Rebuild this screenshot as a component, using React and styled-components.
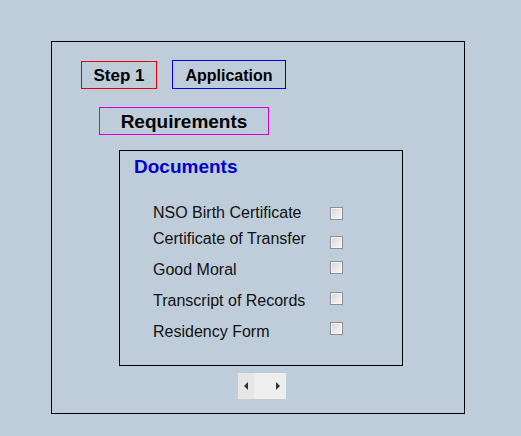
import React from "react";
import styled, { createGlobalStyle } from "styled-components";

const GlobalStyle = createGlobalStyle`
  html, body {
    margin: 0;
    padding: 0;
    background: #bfcddb;
  }
  body {
    font-family: Arial, "Liberation Sans", sans-serif;
    color: #000;
  }
`;

const documents = [
  { label: "NSO Birth Certificate", top: 26, shift: 3 },
  { label: "Certificate of Transfer", top: 8, shift: 6 },
  { label: "Good Moral", top: 12, shift: 0 },
  { label: "Transcript of Records", top: 13, shift: 0 },
  { label: "Residency Form", top: 13, shift: -1 },
];

const App = () => {
  return (
    <>
      <GlobalStyle />
      <Page>
        <Frame>
          <Tabs>
            <Tag $color="#e00000" $w={76} $h={28} $size={17}>
              Step 1
            </Tag>
            <Tag $color="#0000e0" $w={114} $h={29} $size={16}>
              Application
            </Tag>
          </Tabs>
          <Heading>
            <Tag $color="#d000d0" $w={170} $h={28} $size={19}>
              Requirements
            </Tag>
          </Heading>
          <DocBox>
            <DocTitle>Documents</DocTitle>
            {documents.map((d) => (
              <DocRow key={d.label} $top={d.top}>
                <DocLabel>{d.label}</DocLabel>
                <Check $shift={d.shift} />
              </DocRow>
            ))}
          </DocBox>
          <Pager>
            <Arrow $dir="left" />
            <Arrow $dir="right" />
          </Pager>
        </Frame>
      </Page>
    </>
  );
};

export default App;

const Page = styled.div`
  padding: 41px 0 0 51px;
`;

const Frame = styled.div`
  box-sizing: border-box;
  width: 414px;
  height: 373px;
  border: 1px solid #000;
  padding: 18px 0 0 29px;
`;

const Tabs = styled.div`
  display: flex;
  align-items: flex-end;
  gap: 15px;
`;

const Heading = styled.div`
  margin: 18px 0 0 18px;
`;

const Tag = styled.div`
  box-sizing: border-box;
  width: ${(p) => p.$w}px;
  height: ${(p) => p.$h}px;
  border: 1px solid ${(p) => p.$color};
  display: flex;
  align-items: center;
  justify-content: center;
  font-weight: bold;
  font-size: ${(p) => p.$size}px;
  padding-top: 2px;
`;

const DocBox = styled.div`
  box-sizing: border-box;
  width: 284px;
  height: 216px;
  border: 1px solid #000;
  margin: 15px 0 0 38px;
  padding: 5px 0 0 14px;
`;

const DocTitle = styled.div`
  color: #0000c8;
  font-weight: bold;
  font-size: 19px;
  line-height: 22px;
`;

const DocRow = styled.div`
  display: flex;
  align-items: flex-start;
  margin-top: ${(p) => p.$top}px;
  padding-left: 19px;
`;

const DocLabel = styled.div`
  width: 177px;
  font-size: 16px;
  line-height: 18px;
  color: #111;
`;

const Check = styled.div`
  box-sizing: border-box;
  width: 13px;
  height: 13px;
  margin-top: ${(p) => p.$shift}px;
  border: 1px solid #8e8f8f;
  box-shadow: inset 0 0 0 1px #f4f4f4;
  background: linear-gradient(135deg, #d4d4d4 0%, #e8e8e8 50%, #f7f7f7 100%);
`;

const Pager = styled.div`
  box-sizing: border-box;
  display: flex;
  align-items: center;
  justify-content: space-between;
  width: 48px;
  height: 26px;
  padding: 0 6px;
  margin: 7px 0 0 157px;
  background: linear-gradient(to right, #e6e6e6 0 16px, #eeeeee 16px);
`;

const Arrow = styled.div`
  width: 0;
  height: 0;
  border-top: 4px solid transparent;
  border-bottom: 4px solid transparent;
  ${(p) =>
    p.$dir === "left"
      ? "border-right: 4px solid #333;"
      : "border-left: 4px solid #333;"}
`;
